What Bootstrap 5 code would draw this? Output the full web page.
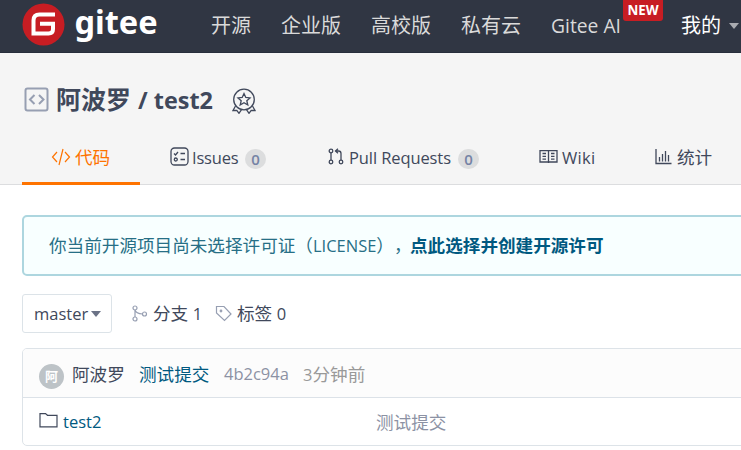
<!DOCTYPE html>
<html lang="zh-CN">
<head>
<meta charset="utf-8">
<meta name="viewport" content="width=device-width, initial-scale=1">
<title>阿波罗/test2 - Gitee</title>
<link href="https://cdn.jsdelivr.net/npm/bootstrap@5.3.0/dist/css/bootstrap.min.css" rel="stylesheet">
<style>
body{font-family:"Open Sans","Noto Sans CJK SC",sans-serif;font-size:17.6px;line-height:24px;color:#40485b;background:#fff;overflow:hidden;white-space:nowrap;text-spacing-trim:space-all}
a{text-decoration:none;color:inherit}
svg{display:block;flex:none;fill:none;stroke:currentColor}
.en{font-size:16.5px}
.pale{color:#979fb2}
.top-nav{height:53px;background:#303643;border-bottom:1px solid #282e3c;padding:0 0 1px 22px;font-size:20px;color:#dadada}
.top-nav .en{font-size:19.3px}
.brand-word{font-family:"Noto Sans","Open Sans",sans-serif;font-weight:700;font-size:32.5px;line-height:36px;color:#fff;width:137px;margin-left:10px;margin-top:-8px}
.n2{width:70px}.n3{width:90px}.n4{width:130px}
.new-tag{left:72px;top:-14px;width:40px;height:21px;line-height:20px;background:#c71d23;border-radius:0 0 3px 3px;color:#fff;font-size:13.3px;font-weight:700;text-align:center}
.caret{width:0;height:0;border:5px solid transparent;border-top:6px solid #a9abb0;border-bottom:0}
.caret-dark{border-top-color:#6b7286;margin-left:3px}
.repo-head{height:132px;background:#f5f5f5;border-bottom:1px solid #dcdddf;padding-left:22px}
.repo-title{height:93px;padding-left:2px;font-size:25px;font-weight:700}
.repo-title .en{font-size:23.4px;margin-left:1px}
.title-text{margin-left:7px;width:177px}
.repo-tabs{height:38px}
.tab-item{height:39px;padding-bottom:16px;margin-bottom:-1px}
.tab-on{width:118px;padding-left:29px;color:#fe7300;border-bottom:3px solid #fe7300;padding-bottom:14px}
.count{width:21px;height:20px;border-radius:10px;background:#dcddde;color:#7583a5;font-size:15px;line-height:20px;text-align:center;margin-left:6px;margin-top:2px;font-weight:600}
.t-issues{width:157px;padding-left:30px}
.t-issues .en{width:47px;margin-left:3px;letter-spacing:-.2px}
.t-pulls{width:210px;padding-left:31px}
.t-pulls .en{width:103px;margin-left:5px;letter-spacing:-.1px}
.t-wiki{width:116px;padding-left:32px}
.t-wiki .en{margin-left:4px;letter-spacing:.3px}
.t-stats{padding-left:32px;padding-bottom:18px}
.t-stats span{margin-left:5px}
.main-area{padding:30px 0 0 22px}
.license-tip{height:61px;width:740px;border:2px solid #add6df;border-radius:5px;background:#f8ffff;color:#276f86;padding:0 0 1px 25px;margin-bottom:18px}
.license-tip b{color:#005980;padding-bottom:1px}
.tip-text{width:361px}
.branch-btn{width:90px;height:39px;border:1px solid #dce3e8;border-radius:3px;padding-left:11px}
.refs{margin-left:19px;width:84px}
.refs>span,.tags>span{margin-left:5px}
.refs,.tags{padding-bottom:1px}
.file-box{width:740px;border:1px solid #dde3e8;border-radius:5px;margin-top:15px;height:98px;overflow:hidden}
.commit-row{height:49px;background:#fcfcfc;border-bottom:1px solid #dce2e8;padding:2px 0 0 16px}
.c-author{width:67px}.c-msg{width:85px}.c-sha{width:79px}
.entry-row{height:47px;padding:0 0 0 16px}
.entry-name{margin-left:5px;width:313px}
.face{width:25px;height:25px;border-radius:50%;background:#bdc3c7;color:#fff;font-size:13px;font-weight:700;line-height:24px;text-align:center;margin-right:8px;margin-top:4px}
.ago{color:#999}
.link{color:#005980}
.mute{color:#8c92a4}
</style>
</head>
<body>
<nav class="top-nav d-flex align-items-center">
  <svg width="43" height="43" viewBox="0 0 43 43" style="margin-top:-3px;margin-left:-.5px"><circle cx="21.500" cy="21.500" r="21" fill="#c71d23" stroke="none"/><path d="M33 11.500H17.500Q11.500 11.500 11.500 17.500V30.500H26.500Q31 30.500 31 26V20.700H18" stroke="#fff" stroke-width="4"/></svg>
  <a class="brand-word" href="#">gitee</a>
  <a class="n2" href="#" style="margin-left:-.5px">开源</a>
  <a class="n3" href="#">企业版</a>
  <a class="n3" href="#">高校版</a>
  <a class="n3" href="#">私有云</a>
  <a class="n4 position-relative" href="#"><span class="en">Gitee AI</span><span class="new-tag position-absolute">NEW</span></a>
  <a class="text-white" href="#">我的</a>
  <span class="caret ms-2"></span>
</nav>

<header class="repo-head">
  <div class="repo-title d-flex align-items-center">
    <svg class="pale" width="25" height="25" viewBox="0 0 25 25" stroke-width="2"><rect x="1.500" y="1.500" width="22" height="22" rx="2"/><path d="M10.500 8l-4.500 4.500 4.500 4.500M15 8l4.500 4.500-4.500 4.500"/></svg>
    <span class="title-text">阿波罗<span class="en"> / test2</span></span>
    <svg width="24" height="26" viewBox="0 0 24 26" stroke-width="1.300" style="margin-left:-1px;margin-top:2px"><circle cx="12" cy="11.500" r="10.300"/><path d="M12 5.500l1.800 4 4.200.4-3.200 2.800 1 4.300L12 14.800 8.200 17l1-4.300L6 9.900l4.200-.4zM3.500 18L1 22.500l3.800-.2L7 25.300l2.500-3.700M20.500 18l2.500 4.500-3.800-.2-2.200 3-2.500-3.700"/></svg>
  </div>
  <div class="repo-tabs d-flex">
    <a class="tab-item tab-on d-flex align-items-center" href="#"><svg width="20" height="18" viewBox="0 0 20 18" stroke-width="1.200"><path d="M6 4L1.500 9 6 14M14 4l4.500 5-4.500 5M12 1L8 17"/></svg><span class="ms-1">代码</span></a>
    <a class="tab-item t-issues d-flex align-items-center" href="#"><svg width="19" height="19" viewBox="0 0 19 19" stroke-width="1.300" style="margin-top:-3px"><rect x="1" y="1" width="17" height="17" rx="3.500"/><path d="M4 6.500l1.500 1.500L8 5M10.500 6.500H15M10.500 12.500H15"/><circle cx="5.800" cy="12.500" r="1.500"/></svg><span class="en">Issues</span><span class="count">0</span></a>
    <a class="tab-item t-pulls d-flex align-items-center" href="#"><svg width="16" height="17" viewBox="0 0 16 17" stroke-width="1.300" style="margin-top:-2px"><circle cx="3" cy="3" r="1.800"/><circle cx="3" cy="14" r="1.800"/><circle cx="13" cy="14" r="1.800"/><path d="M3 5v7M13 12V5.500Q13 3 10.500 3H7M10 .8L7.500 3 10 5.200"/></svg><span class="en">Pull Requests</span><span class="count">0</span></a>
    <a class="tab-item t-wiki d-flex align-items-center" href="#"><svg width="19" height="15" viewBox="0 0 19 15" stroke-width="1.300" style="margin-top:-2px"><path d="M1 1.600H18V13H1zM9.500 1.600V14M3.500 4.500H7M3.500 7.300H7M3.500 10.100H7M12 4.500h3.500M12 7.300h3.500M12 10.100h3.500"/></svg><span class="en">Wiki</span></a>
    <a class="tab-item t-stats d-flex align-items-center" href="#"><svg width="17" height="17" viewBox="0 0 17 17" stroke-width="1.300"><path d="M1 1v14.500h15.500M4.500 9v4.500M7.500 6v7.500M10.500 3v10.500M13.500 7v6.500"/></svg><span>统计</span></a>
  </div>
</header>

<main class="main-area">
  <div class="license-tip d-flex align-items-center"><span class="tip-text">你当前开源项目尚未选择许可证（<span class="en">LICENSE</span>），</span><b>点此选择并创建开源许可</b></div>
  <div class="d-flex align-items-center">
    <a class="branch-btn d-flex align-items-center" href="#"><span class="en">master</span><span class="caret caret-dark"></span></a>
    <a class="d-flex align-items-center refs" href="#"><svg class="pale" width="17" height="17" viewBox="0 0 17 17" stroke-width="1.200"><circle cx="4" cy="3" r="2"/><circle cx="4" cy="14" r="2"/><circle cx="13.500" cy="9" r="2"/><path d="M4 5v7M4 5q1 3.500 7.500 4"/></svg><span>分支 <span class="en">1</span></span></a>
    <a class="d-flex align-items-center tags" href="#"><svg class="pale" width="17" height="17" viewBox="0 0 17 17" stroke-width="1.200"><path d="M1.500 1.500H9L16 9l-6.500 6.500L1.500 8z"/><circle cx="6" cy="6" r=".8"/></svg><span>标签 <span class="en">0</span></span></a>
  </div>
  <section class="file-box">
    <div class="commit-row d-flex align-items-center"><span class="face">阿</span><a class="c-author" href="#">阿波罗</a><a class="link c-msg" href="#">测试提交</a><a class="mute en c-sha" href="#">4b2c94a</a><span class="ago"><span class="en">3</span>分钟前</span></div>
    <div class="entry-row d-flex align-items-center"><svg width="19" height="17" viewBox="0 0 19 17" stroke-width="1.200" style="margin-top:-2px"><path d="M1 14.800V1.600H6.500L8.500 3.300H18V14.800z"/></svg><a class="link en entry-name" href="#">test2</a><span class="mute">测试提交</span></div>
  </section>
</main>
<script src="https://cdn.jsdelivr.net/npm/bootstrap@5.3.0/dist/js/bootstrap.bundle.min.js"></script>
</body>
</html>
